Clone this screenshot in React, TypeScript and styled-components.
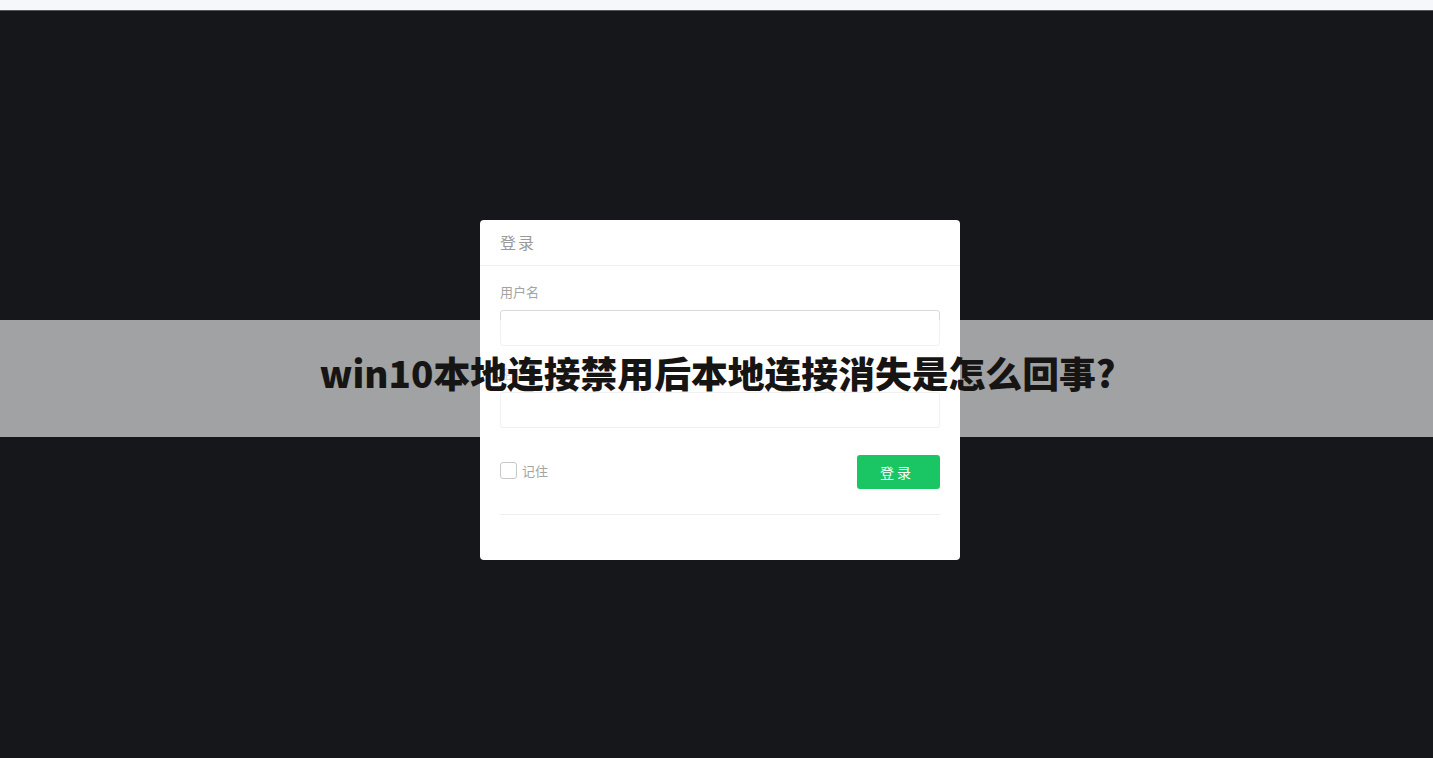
import React from "react";
import styled, { createGlobalStyle } from "styled-components";

const GlobalStyle = createGlobalStyle`
  html, body {
    margin: 0;
    padding: 0;
    height: 100%;
  }
  body {
    font-family: "Noto Sans CJK SC", "Noto Sans", sans-serif;
    background: #16171b;
    overflow: hidden;
  }
`;

const Page = styled.div`
  position: relative;
  width: 100%;
  height: 758px;
  display: flex;
  flex-direction: column;
`;

const TopBar = styled.div`
  height: 11px;
  background: #f6f7fb;
  border-bottom: 1px solid #55565a;
  box-sizing: border-box;
`;

const Stage = styled.div`
  flex: 1;
  background: #16171b;
  display: flex;
  justify-content: center;
  align-items: flex-start;
  padding-top: 209px;
  padding-left: 7px;
`;

const Modal = styled.div`
  width: 480px;
  height: 340px;
  background: #fff;
  border-radius: 4px;
  box-sizing: border-box;
  display: flex;
  flex-direction: column;
`;

const ModalHeader = styled.div`
  height: 46px;
  padding: 0 20px;
  display: flex;
  align-items: center;
  border-bottom: 1px solid #eeeeee;
  box-sizing: border-box;
  font-size: 16px;
  color: #999;
  letter-spacing: 2px;
  padding-bottom: 1px;
`;

const ModalBody = styled.div`
  padding: 16px 20px 0;
  display: flex;
  flex-direction: column;
`;

const Field = styled.div`
  display: flex;
  flex-direction: column;
  margin-bottom: 18px;
`;

const Label = styled.label`
  font-size: 13px;
  color: #a3a3a3;
  line-height: 20px;
  margin-bottom: 8px;
`;

const Input = styled.input`
  height: 36px;
  border: 1px solid #d9d9d9;
  border-radius: 3px;
  box-sizing: border-box;
  outline: none;
  padding: 0 10px;
  font-size: 14px;
`;

const ActionRow = styled.div`
  display: flex;
  align-items: center;
  justify-content: space-between;
  margin-top: 9px;
  padding-bottom: 25px;
  border-bottom: 1px solid #eeeeee;
`;

const Remember = styled.label`
  display: flex;
  align-items: center;
  gap: 5px;
  font-size: 13px;
  color: #a3a3a3;
  margin-bottom: 3px;
`;

const Check = styled.span`
  width: 17px;
  height: 17px;
  border: 1px solid #c8c8c8;
  border-radius: 3px;
  box-sizing: border-box;
`;

const LoginButton = styled.button`
  width: 83px;
  height: 34px;
  border: none;
  border-radius: 3px;
  background: #19c663;
  color: #fff;
  font-family: inherit;
  font-size: 14px;
  letter-spacing: 3px;
  padding-left: 3px;
`;

const Band = styled.div`
  position: absolute;
  left: 0;
  right: 0;
  top: 320px;
  height: 117px;
  background: rgba(255, 255, 255, 0.6);
  display: flex;
  align-items: center;
  justify-content: center;
`;

const Headline = styled.h1`
  margin: 0 0 12px;
  font-family: "Noto Sans CJK SC", "Noto Sans", sans-serif;
  font-weight: 900;
  font-size: 36.8px;
  color: #171414;
  line-height: 1;
  padding-left: 2px;
`;

export default function App() {
  return (
    <>
      <GlobalStyle />
      <Page>
        <TopBar />
        <Stage>
          <Modal>
            <ModalHeader>登录</ModalHeader>
            <ModalBody>
              <Field>
                <Label>用户名</Label>
                <Input type="text" />
              </Field>
              <Field>
                <Label>密码</Label>
                <Input type="password" />
              </Field>
              <ActionRow>
                <Remember>
                  <Check />
                  记住
                </Remember>
                <LoginButton>登录</LoginButton>
              </ActionRow>
            </ModalBody>
          </Modal>
        </Stage>
        <Band>
          <Headline>win10本地连接禁用后本地连接消失是怎么回事?</Headline>
        </Band>
      </Page>
    </>
  );
}
